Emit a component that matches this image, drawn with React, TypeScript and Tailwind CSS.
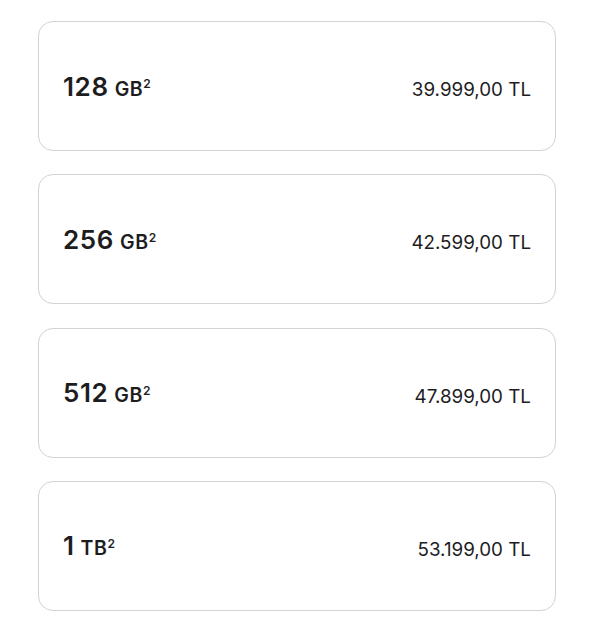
const options = [
  { size: '128', unit: 'GB', price: '39.999,00 TL' },
  { size: '256', unit: 'GB', price: '42.599,00 TL' },
  { size: '512', unit: 'GB', price: '47.899,00 TL' },
  { size: '1', unit: 'TB', price: '53.199,00 TL' },
]

function App() {
  return (
    <div className="min-h-screen bg-white pt-[21px] pl-[38px] pr-[40px] font-['Inter',sans-serif] text-[#1d1d1f]">
      <div className="flex flex-col gap-[23.3px]">
        {options.map((opt) => (
          <div
            key={opt.size}
            className="h-[130px] flex items-center justify-between px-6 rounded-[15px] border border-[#d2d2d7]"
          >
            <span className="font-semibold">
              <span className="text-[26px] tracking-[0.6px]">{opt.size}</span>
              <span className="text-[19.5px] ml-[6px] tracking-[0.6px]">
                {opt.unit}
                <sup className="text-[12px] -top-[0.6em]">2</sup>
              </span>
            </span>
            <span className="text-[18.8px] mt-[8px] font-normal">{opt.price}</span>
          </div>
        ))}
      </div>
    </div>
  )
}

export default App
